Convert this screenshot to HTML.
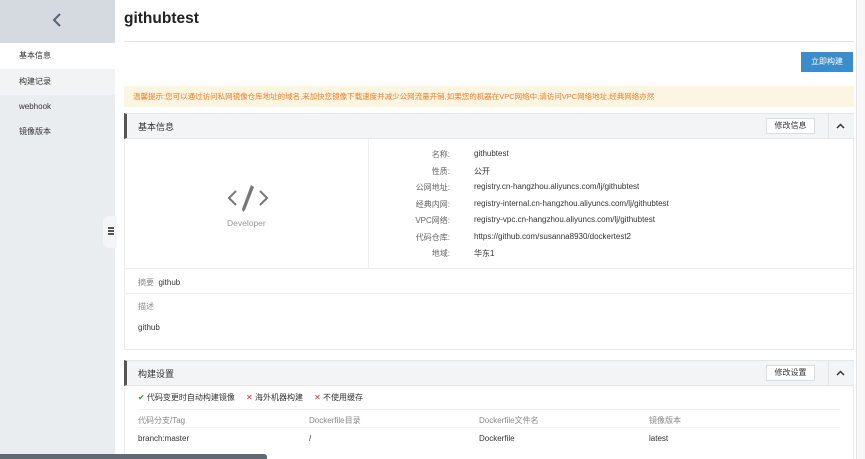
<!DOCTYPE html>
<html><head><meta charset="utf-8"><style>
*{margin:0;padding:0;box-sizing:border-box}
body{width:865px;height:459px;overflow:hidden;background:#fff;font-family:"Liberation Sans","Noto Sans CJK SC",sans-serif;font-size:8px;color:#333;position:relative}
.a{position:absolute}
.side{left:0;top:0;width:115px;height:459px;background:#eaedf0}
.sh{left:0;top:0;width:115px;height:43px;background:#d5d9e0}
.si{left:0;width:115px;height:26px;line-height:26px;padding-left:19px;font-size:8px;color:#333}
.hdr{left:124px;width:730px;height:26px;background:#f3f4f6;border-left:3px solid #555;border-top:1px solid #e5e6e8;border-bottom:1px solid #e5e6e8}
.hdr span{position:absolute;left:11px;top:6px;font-size:9px;color:#333}
.btn{background:#fff;border:1px solid #ddd;font-size:8px;text-align:center;color:#333}
.lab{width:80px;text-align:right;color:#666;left:370px}
.val{left:474px;color:#333}
.gray{color:#888}
</style></head><body>
<div class="a side"></div>
<div class="a sh"></div>
<svg class="a" style="left:51px;top:12px" width="12" height="16"><path d="M9 2 L3 8 L9 14" stroke="#5a6470" stroke-width="2" fill="none"/></svg>
<div class="a si" style="top:43px;background:#fff">基本信息</div>
<div class="a si" style="top:69px;background:#f1f3f5">构建记录</div>
<div class="a si" style="top:94px">webhook</div>
<div class="a si" style="top:119px">镜像版本</div>
<div class="a" style="left:103px;top:216px;width:14px;height:32px;background:#f4f5f7;border-radius:7px 0 0 7px"></div>
<div class="a" style="left:108px;top:227px;width:6px;height:8px;border-top:2px solid #555;border-bottom:2px solid #555"></div>
<div class="a" style="left:108px;top:230px;width:6px;height:2px;background:#555"></div>

<div class="a" style="left:124px;top:10px;font-size:15.5px;font-weight:bold;color:#222">githubtest</div>
<div class="a" style="left:124px;top:41px;width:730px;height:1px;background:#e3e3e3"></div>
<div class="a" style="left:801px;top:52px;width:52px;height:20px;background:#3a8dca;color:#fff;font-size:8px;line-height:20px;text-align:center">立即构建</div>
<div class="a" style="left:124px;top:86px;width:730px;height:21px;background:#fcf5e1;color:#ef7b27;font-size:7.5px;line-height:21px;padding-left:9px;white-space:nowrap">温馨提示:您可以通过访问私网镜像仓库地址的域名,来加快您镜像下载速度并减少公网流量开销,如果您的机器在VPC网络中,请访问VPC网络地址,经典网络亦然</div>

<div class="a hdr" style="top:113px"><span>基本信息</span></div>
<div class="a btn" style="left:766px;top:118px;width:49px;height:16px;line-height:14px">修改信息</div>
<div class="a" style="left:828px;top:113px;width:1px;height:26px;background:#e3e3e3"></div>
<svg class="a" style="left:836px;top:123px" width="9" height="6"><path d="M1 5 L4.5 1.5 L8 5" stroke="#333" stroke-width="1.5" fill="none"/></svg>
<div class="a" style="left:124px;top:139px;width:730px;height:211px;border:1px solid #eaeaea;border-top:none"></div>
<div class="a" style="left:368px;top:139px;width:1px;height:129px;background:#eee"></div>
<div class="a" style="left:124px;top:268px;width:730px;height:1px;background:#eee"></div>
<div class="a" style="left:124px;top:293px;width:730px;height:1px;background:#eee"></div>
<svg class="a" style="left:226px;top:183px" width="44" height="30"><path d="M10 8 L3 15 L10 22 M34 8 L41 15 L34 22" stroke="#777" stroke-width="2" fill="none"/><path d="M25 2 L28 4 L19 27 L17 29 L16 26 Z" fill="#777"/></svg>
<div class="a gray" style="left:227px;top:218px;font-size:8.5px;color:#999">Developer</div>
<div class="a lab" style="top:149px">名称:</div><div class="a val" style="top:149px">githubtest</div>
<div class="a lab" style="top:166px">性质:</div><div class="a val" style="top:166px">公开</div>
<div class="a lab" style="top:182px">公网地址:</div><div class="a val" style="top:182px">registry.cn-hangzhou.aliyuncs.com/lj/githubtest</div>
<div class="a lab" style="top:199px">经典内网:</div><div class="a val" style="top:199px">registry-internal.cn-hangzhou.aliyuncs.com/lj/githubtest</div>
<div class="a lab" style="top:215px">VPC网络:</div><div class="a val" style="top:215px">registry-vpc.cn-hangzhou.aliyuncs.com/lj/githubtest</div>
<div class="a lab" style="top:232px">代码仓库:</div><div class="a val" style="top:232px">https://github.com/susanna8930/dockertest2</div>
<div class="a lab" style="top:248px">地域:</div><div class="a val" style="top:248px">华东1</div>
<div class="a" style="left:138px;top:277px"><span class="gray">摘要</span>&nbsp; github</div>
<div class="a gray" style="left:138px;top:301px">描述</div>
<div class="a" style="left:138px;top:323px">github</div>

<div class="a hdr" style="top:360px"><span>构建设置</span></div>
<div class="a btn" style="left:766px;top:365px;width:49px;height:16px;line-height:14px">修改设置</div>
<div class="a" style="left:828px;top:360px;width:1px;height:26px;background:#e3e3e3"></div>
<svg class="a" style="left:836px;top:370px" width="9" height="6"><path d="M1 5 L4.5 1.5 L8 5" stroke="#333" stroke-width="1.5" fill="none"/></svg>
<div class="a" style="left:124px;top:386px;width:730px;height:73px;border-left:1px solid #eaeaea;border-right:1px solid #eaeaea"></div>
<div class="a" style="left:138px;top:392px"><span style="color:#3a9a3a">✔</span> 代码变更时自动构建镜像 &nbsp;&nbsp;&nbsp;&nbsp;<span style="color:#e03030">✕</span> 海外机器构建 &nbsp;&nbsp;&nbsp;&nbsp;<span style="color:#e03030">✕</span> 不使用缓存</div>
<div class="a" style="left:138px;top:409px;width:702px;height:1px;background:#eee"></div>
<div class="a" style="left:138px;top:427px;width:702px;height:1px;background:#f2f2f2"></div>
<div class="a gray" style="left:138px;top:415px">代码分支/Tag</div>
<div class="a gray" style="left:309px;top:415px">Dockerfile目录</div>
<div class="a gray" style="left:479px;top:415px">Dockerfile文件名</div>
<div class="a gray" style="left:649px;top:415px">镜像版本</div>
<div class="a" style="left:138px;top:434px">branch:master</div>
<div class="a" style="left:309px;top:434px">/</div>
<div class="a" style="left:479px;top:434px">Dockerfile</div>
<div class="a" style="left:649px;top:434px">latest</div>
<div class="a" style="left:0;top:454px;width:267px;height:5px;background:#5f6b73;border-radius:0 3px 0 0"></div>
<div class="a" style="left:856px;top:0;width:9px;height:459px;background:#f6f6f6;border-left:1px solid #e6e6e6"></div>
</body></html>
